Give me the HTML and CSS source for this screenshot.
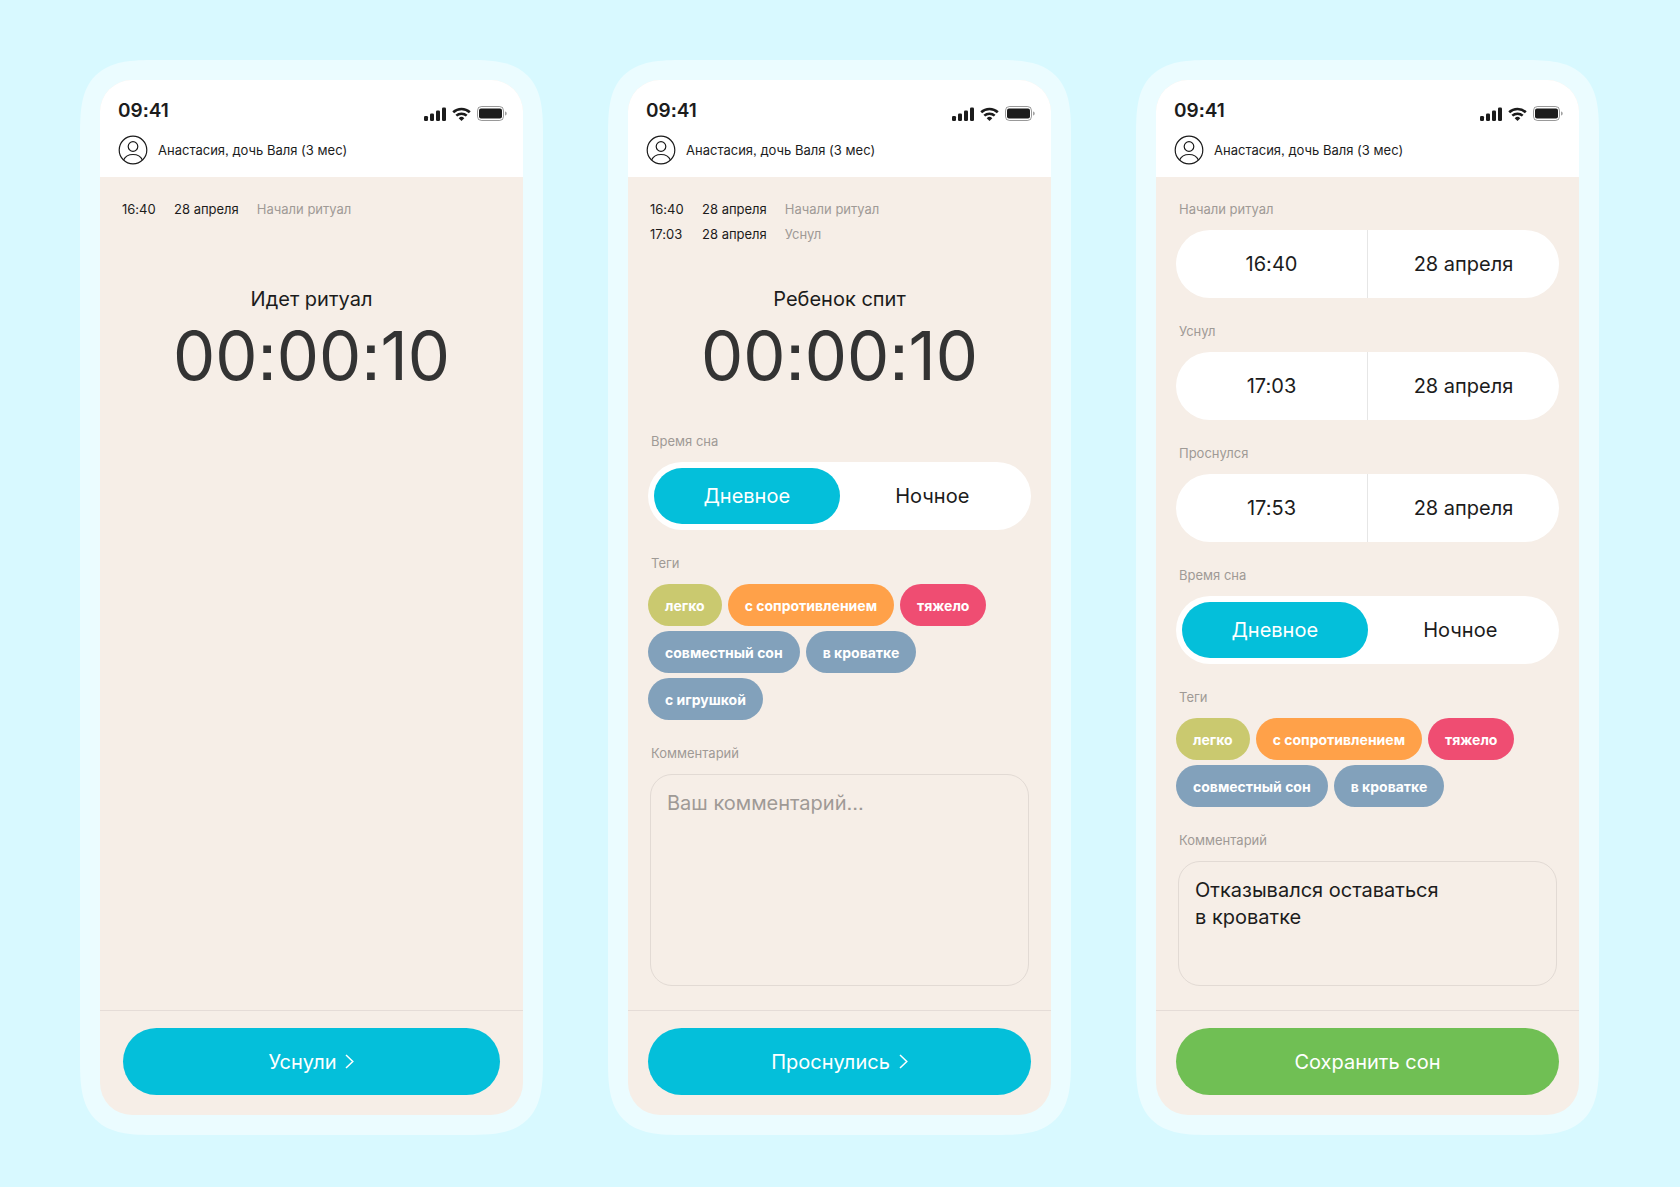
FILE: index.html
```html
<!DOCTYPE html>
<html lang="ru">
<head>
    <meta charset="UTF-8">
    <meta name="viewport" content="width=device-width, initial-scale=1.0">
    <title>Дневник сна</title>
    <link rel="stylesheet" href="styles.css">
</head>
<body>
    <!-- общие иконки -->
    <svg class="sprite" aria-hidden="true">
        <symbol id="signal" viewBox="0 0 22 14">
            <rect x="0" y="9" width="4" height="5" rx="1.2"/>
            <rect x="6" y="6.5" width="4" height="7.5" rx="1.2"/>
            <rect x="12" y="3.5" width="4" height="10.5" rx="1.2"/>
            <rect x="18" y="0.5" width="4" height="13.5" rx="1.2"/>
        </symbol>
        <symbol id="wifi" viewBox="0 0 19 14">
            <path d="M1.2 5.3a12 12 0 0 1 16.6 0" fill="none" stroke="currentColor" stroke-width="2.6"/>
            <path d="M4.3 8.7a7.6 7.6 0 0 1 10.4 0" fill="none" stroke="currentColor" stroke-width="2.5"/>
            <path d="M9.5 14l-2.8-2.8a4 4 0 0 1 5.6 0z"/>
        </symbol>
        <symbol id="battery" viewBox="0 0 30 15">
            <rect x="0.5" y="0.5" width="26" height="14" rx="4" fill="none" stroke="currentColor" stroke-opacity="0.45"/>
            <rect x="2" y="2.5" width="23" height="10" rx="2"/>
            <path d="M28.2 5.5v4c.9-.4 1.4-1.1 1.4-2s-.5-1.6-1.4-2z" fill-opacity="0.5"/>
        </symbol>
        <symbol id="user" viewBox="0 0 30 30">
            <g fill="none" stroke="currentColor" stroke-width="1.2">
                <circle cx="15" cy="15" r="13.8"/>
                <circle cx="15" cy="11.5" r="4.8"/>
                <path d="M5.6 25c1.5-3.4 5-5.5 9.4-5.5s7.9 2.1 9.4 5.5"/>
            </g>
        </symbol>
        <symbol id="chevron" viewBox="0 0 9 15">
            <path d="M1 1l6.8 6.5L1 14" fill="none" stroke="currentColor" stroke-width="1.5"/>
        </symbol>
    </svg>

    <main class="screens">
        <!-- ритуал -->
        <section class="phone">
            <div class="screen">
                <header class="header">
                    <div class="status">
                        <span class="clock">09:41</span>
                        <span class="indicators">
                            <svg class="signal"><use href="#signal"/></svg>
                            <svg class="wifi"><use href="#wifi"/></svg>
                            <svg class="battery"><use href="#battery"/></svg>
                        </span>
                    </div>
                    <div class="profile">
                        <svg class="avatar"><use href="#user"/></svg>
                        <span>Анастасия, дочь Валя (3 мес)</span>
                    </div>
                </header>

                <div class="content">
                    <div class="log">
                        <div class="log-row">
                            <span class="log-time">16:40</span>
                            <span>28 апреля</span>
                            <span class="muted">Начали ритуал</span>
                        </div>
                    </div>
                    <div class="timer">
                        <h1 class="timer-title">Идет ритуал</h1>
                        <div class="timer-value">00:00:10</div>
                    </div>
                </div>

                <footer class="footer footer-narrow">
                    <button type="button" class="btn">
                        Уснули
                        <svg class="chevron"><use href="#chevron"/></svg>
                    </button>
                </footer>
            </div>
        </section>

        <!-- ребенок спит -->
        <section class="phone">
            <div class="screen">
                <header class="header">
                    <div class="status">
                        <span class="clock">09:41</span>
                        <span class="indicators">
                            <svg class="signal"><use href="#signal"/></svg>
                            <svg class="wifi"><use href="#wifi"/></svg>
                            <svg class="battery"><use href="#battery"/></svg>
                        </span>
                    </div>
                    <div class="profile">
                        <svg class="avatar"><use href="#user"/></svg>
                        <span>Анастасия, дочь Валя (3 мес)</span>
                    </div>
                </header>

                <div class="content">
                    <div class="log">
                        <div class="log-row">
                            <span class="log-time">16:40</span>
                            <span>28 апреля</span>
                            <span class="muted">Начали ритуал</span>
                        </div>
                        <div class="log-row">
                            <span class="log-time">17:03</span>
                            <span>28 апреля</span>
                            <span class="muted">Уснул</span>
                        </div>
                    </div>
                    <div class="timer">
                        <h1 class="timer-title">Ребенок спит</h1>
                        <div class="timer-value">00:00:10</div>
                    </div>

                    <fieldset class="group">
                        <legend class="label">Время сна</legend>
                        <div class="toggle">
                            <label class="toggle-item"><input type="radio" name="period" checked><span>Дневное</span></label>
                            <label class="toggle-item"><input type="radio" name="period"><span>Ночное</span></label>
                        </div>
                    </fieldset>

                    <div class="group">
                        <div class="label">Теги</div>
                        <div class="tags">
                            <button type="button" class="tag tag-easy">легко</button>
                            <button type="button" class="tag tag-resist">с сопротивлением</button>
                            <button type="button" class="tag tag-hard">тяжело</button>
                            <button type="button" class="tag">совместный сон</button>
                            <button type="button" class="tag">в кроватке</button>
                            <button type="button" class="tag">с игрушкой</button>
                        </div>
                    </div>

                    <div class="group group-fill">
                        <label class="label" for="comment">Комментарий</label>
                        <textarea class="comment" id="comment" placeholder="Ваш комментарий..."></textarea>
                    </div>
                </div>

                <footer class="footer">
                    <button type="button" class="btn">
                        Проснулись
                        <svg class="chevron"><use href="#chevron"/></svg>
                    </button>
                </footer>
            </div>
        </section>

        <!-- сохранение сна -->
        <section class="phone">
            <div class="screen">
                <header class="header">
                    <div class="status">
                        <span class="clock">09:41</span>
                        <span class="indicators">
                            <svg class="signal"><use href="#signal"/></svg>
                            <svg class="wifi"><use href="#wifi"/></svg>
                            <svg class="battery"><use href="#battery"/></svg>
                        </span>
                    </div>
                    <div class="profile">
                        <svg class="avatar"><use href="#user"/></svg>
                        <span>Анастасия, дочь Валя (3 мес)</span>
                    </div>
                </header>

                <div class="content">
                    <div class="group">
                        <label class="label" id="ritualLabel" for="ritualTime">Начали ритуал</label>
                        <div class="moment">
                            <input type="text" id="ritualTime" value="16:40">
                            <input type="text" aria-labelledby="ritualLabel" value="28 апреля">
                        </div>
                    </div>
                    <div class="group">
                        <label class="label" id="asleepLabel" for="asleepTime">Уснул</label>
                        <div class="moment">
                            <input type="text" id="asleepTime" value="17:03">
                            <input type="text" aria-labelledby="asleepLabel" value="28 апреля">
                        </div>
                    </div>
                    <div class="group">
                        <label class="label" id="awakeLabel" for="awakeTime">Проснулся</label>
                        <div class="moment">
                            <input type="text" id="awakeTime" value="17:53">
                            <input type="text" aria-labelledby="awakeLabel" value="28 апреля">
                        </div>
                    </div>

                    <fieldset class="group">
                        <legend class="label">Время сна</legend>
                        <div class="toggle">
                            <label class="toggle-item"><input type="radio" name="savedPeriod" checked><span>Дневное</span></label>
                            <label class="toggle-item"><input type="radio" name="savedPeriod"><span>Ночное</span></label>
                        </div>
                    </fieldset>

                    <div class="group">
                        <div class="label">Теги</div>
                        <div class="tags">
                            <button type="button" class="tag tag-easy">легко</button>
                            <button type="button" class="tag tag-resist">с сопротивлением</button>
                            <button type="button" class="tag tag-hard">тяжело</button>
                            <button type="button" class="tag">совместный сон</button>
                            <button type="button" class="tag">в кроватке</button>
                        </div>
                    </div>

                    <div class="group group-fill">
                        <label class="label" for="savedComment">Комментарий</label>
                        <textarea class="comment" id="savedComment">Отказывался оставаться
в кроватке</textarea>
                    </div>
                </div>

                <footer class="footer">
                    <button type="button" class="btn btn-save">Сохранить сон</button>
                </footer>
            </div>
        </section>
    </main>
</body>
</html>
```
FILE: styles.css
```css
* {
    box-sizing: border-box;
}
body {
    margin: 0;
    background-color: #d8f9ff;
    color: #1c1c1c;
    font-family: Inter, "Liberation Sans", sans-serif;
    font-size: 13px;
    line-height: 18px;
    font-feature-settings: "calt" 0, "ss07"; /* квадратные точки, двоеточие на базовой линии */
}
button, input, textarea {
    font-family: inherit;
    font-feature-settings: inherit;
    color: inherit;
}
.sprite {
    display: none;
}
.screens {
    display: grid;
    grid-template-columns: repeat(auto-fit, minmax(400px, 1fr));
    gap: 65px;
    min-height: 100vh;
    padding: 60px 81px 52px 80px;
}
.phone {
    display: flex;
    padding: 20px;
    background-color: #ebfcff;
    border-radius: 54px;
}
.screen {
    flex: 1;
    min-width: 0;
    display: flex;
    flex-direction: column;
    background-color: #f6eee7;
    border-radius: 32px;
    overflow: hidden;
}
@supports (corner-shape: superellipse(1.6)) {
    .phone {
        border-radius: 76px;
        corner-shape: superellipse(1.6);
    }
}

/* шапка */
.header {
    padding: 19px 16px 12px 18px;
    background-color: #fff;
}
.status {
    display: flex;
    justify-content: space-between;
    align-items: center;
}
.clock {
    font-size: 19px;
    font-weight: 600;
    line-height: 24px;
}
.indicators {
    display: flex;
    align-items: center;
    gap: 6px;
    padding-top: 5px;
}
.indicators svg {
    fill: currentColor;
}
.signal {
    width: 22px;
    height: 14px;
}
.wifi {
    width: 19px;
    height: 14px;
}
.battery {
    width: 30px;
    height: 15px;
}
.profile {
    display: flex;
    align-items: center;
    gap: 10px;
    margin-top: 12px;
}
.avatar {
    width: 30px;
    height: 30px;
}

/* содержимое */
.content {
    flex: 1;
    display: flex;
    flex-direction: column;
    gap: 24px;
    padding: 23px 20px 24px;
}
.log {
    display: flex;
    flex-direction: column;
    gap: 7px;
    min-height: 43px;
    padding-left: 2px;
}
.log-row {
    display: flex;
    gap: 18px;
}
.log-time {
    min-width: 34px;
}
.muted {
    color: #9f9a96;
}
.timer {
    padding: 19px 0 16px;
    text-align: center;
}
.timer-title {
    margin: 0 0 7px;
    font-size: 20px;
    font-weight: 400;
    line-height: 27px;
}
.timer-value {
    color: #333;
    font-size: 67px;
    line-height: 72px;
}
.group {
    display: flex;
    flex-direction: column;
    min-width: 0;
    margin: 0;
    padding: 0;
    border: none;
}
.group-fill {
    flex: 1;
}
.label {
    margin-bottom: 12px;
    padding: 0 3px;
    color: #9f9a96;
}
.toggle {
    display: flex;
    padding: 6px;
    background-color: #fff;
    border-radius: 34px;
}
.toggle-item {
    flex: 1;
    cursor: pointer;
}
.toggle-item input {
    position: absolute;
    opacity: 0;
}
.toggle-item span {
    display: block;
    border-radius: 28px;
    font-size: 20px;
    line-height: 56px;
    text-align: center;
}
.toggle-item input:checked + span {
    background-color: #04bfda;
    color: #fff;
}
.moment {
    display: flex;
    background-color: #fff;
    border-radius: 34px;
    overflow: hidden;
}
.moment input {
    flex: 1;
    min-width: 0;
    height: 68px;
    padding: 0;
    border: none;
    background: none;
    font-size: 20px;
    text-align: center;
}
.moment input + input {
    border-left: 1px solid #e6e6e6;
}
.tags {
    display: flex;
    flex-wrap: wrap;
    gap: 5px 6px;
}
.tag {
    height: 42px;
    padding: 0 17px;
    border: none;
    border-radius: 21px;
    background-color: #82a1bb;
    color: #fff;
    font-size: 14px;
    font-weight: 700;
    cursor: pointer;
}
.tag-easy {
    background-color: #cac96f;
}
.tag-resist {
    background-color: #ffa149;
}
.tag-hard {
    background-color: #ef4d72;
}
.comment {
    flex: 1;
    min-height: 100px;
    margin: 0 2px;
    padding: 15px 16px;
    border: 1px solid #e2dad4;
    border-radius: 22px;
    background: none;
    font-size: 20px;
    line-height: 27px;
    resize: none;
}
.comment::placeholder {
    color: #9f9a96;
}

/* низ экрана */
.footer {
    padding: 17px 20px 20px;
    border-top: 1px solid #e5dcd7;
}
.footer-narrow {
    padding-left: 23px;
    padding-right: 23px;
}
.btn {
    display: flex;
    justify-content: center;
    align-items: center;
    gap: 9px;
    width: 100%;
    height: 67px;
    border: none;
    border-radius: 34px;
    background-color: #04bfda;
    color: #fff;
    font-size: 20px;
    cursor: pointer;
}
.btn-save {
    background-color: #70bf54;
}
.chevron {
    width: 9px;
    height: 15px;
}
```
